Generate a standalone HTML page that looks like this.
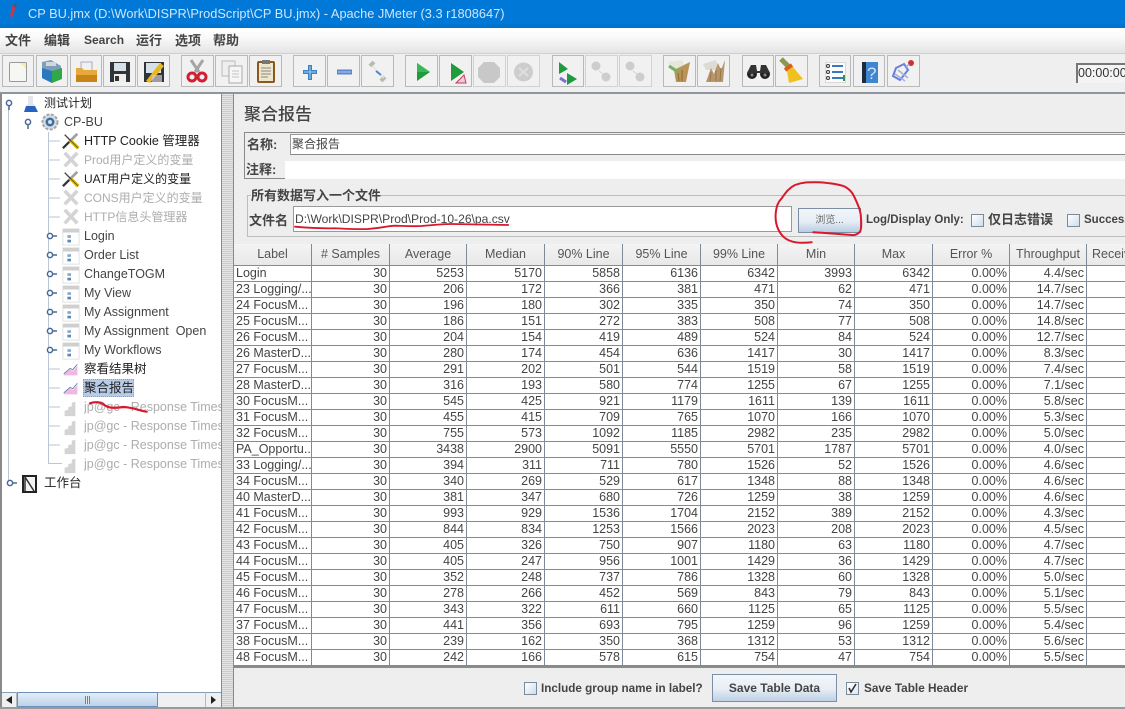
<!DOCTYPE html>
<html><head><meta charset="utf-8">
<style>
html,body{margin:0;padding:0;width:1125px;height:709px;overflow:hidden;background:#eee;}
body{position:relative;font-family:"Liberation Sans","Noto Sans CJK SC",sans-serif;color:#444;}
.a{position:absolute;white-space:nowrap;}
.btn{position:absolute;top:55px;height:32px;box-sizing:border-box;border:1px solid #b9b9b9;background:#f1f1f1;}
.m{position:absolute;top:32px;font-size:13px;line-height:17px;font-weight:bold;color:#444;white-space:nowrap;}
.t{position:absolute;left:84px;font-size:12.5px;line-height:18px;height:18px;white-space:nowrap;color:#444;}
.g{color:#adadad;}
.k{color:#222;}
#tb{position:absolute;left:234px;top:244px;width:891px;height:424px;overflow:hidden;background:#fff;}
table{border-collapse:separate;border-spacing:0;table-layout:fixed;width:891px;font-size:12.5px;color:#444;}
td,th{padding:0 2px 0 1px;height:15px;line-height:15px;border-right:1px solid #7c8a99;border-bottom:1px solid #8a8a8a;text-align:right;overflow:hidden;white-space:nowrap;font-weight:normal;box-sizing:content-box;}
th{height:21px;line-height:21px;text-align:center;background:linear-gradient(#f4f4f4,#e8e8e8);padding:0;border-top:0;color:#555;}
td:first-child{text-align:left;padding-left:2px;padding-right:1px;}
td:last-child{border-right:0;}
.cb{position:absolute;width:13px;height:13px;box-sizing:border-box;border:1px solid #7a8a99;background:linear-gradient(135deg,#fff,#cfdcec);}
</style></head>
<body>
<!-- title bar -->
<div class="a" style="left:0;top:0;width:1125px;height:24px;background:#0078d7;"></div>
<div class="a" style="left:0;top:24px;width:1125px;height:4px;background:#0073ce;"></div>
<div class="a" style="left:28px;top:5px;font-size:12.8px;line-height:18px;color:#cfe5f8;">CP BU.jmx (D:\Work\DISPR\ProdScript\CP BU.jmx) - Apache JMeter (3.3 r1808647)</div>
<!-- menu -->
<div class="a" style="left:0;top:28px;width:1125px;height:25px;background:linear-gradient(#fff,#fafafa 35%,#e4e4e4);"></div>
<div class="m" style="left:5px;">文件</div>
<div class="m" style="left:44px;">编辑</div>
<div class="m" style="left:84px;font-size:12px;">Search</div>
<div class="m" style="left:136px;">运行</div>
<div class="m" style="left:175px;">选项</div>
<div class="m" style="left:213px;">帮助</div>
<!-- toolbar -->
<div class="a" style="left:0;top:53px;width:1125px;height:39px;background:#efefef;border-top:1px solid #d0d0d0;box-sizing:border-box;"></div>
<div class="btn" style="left:2px;width:32px;"></div><div class="btn" style="left:36px;width:32px;"></div><div class="btn" style="left:70px;width:32px;"></div><div class="btn" style="left:103px;width:33px;"></div><div class="btn" style="left:137px;width:33px;"></div>
<div class="btn" style="left:181px;width:33px;"></div><div class="btn" style="left:215px;width:33px;"></div><div class="btn" style="left:249px;width:33px;"></div>
<div class="btn" style="left:293px;width:33px;"></div><div class="btn" style="left:327px;width:33px;"></div><div class="btn" style="left:361px;width:33px;"></div>
<div class="btn" style="left:405px;width:33px;"></div><div class="btn" style="left:439px;width:33px;"></div><div class="btn" style="left:473px;width:33px;border-color:#d2d2d2;"></div><div class="btn" style="left:507px;width:33px;border-color:#d2d2d2;"></div>
<div class="btn" style="left:552px;width:32px;"></div><div class="btn" style="left:585px;width:33px;border-color:#d2d2d2;"></div><div class="btn" style="left:619px;width:33px;border-color:#d2d2d2;"></div>
<div class="btn" style="left:663px;width:33px;"></div><div class="btn" style="left:697px;width:33px;"></div>
<div class="btn" style="left:742px;width:32px;"></div><div class="btn" style="left:775px;width:33px;"></div>
<div class="btn" style="left:819px;width:32px;"></div><div class="btn" style="left:853px;width:32px;"></div><div class="btn" style="left:887px;width:33px;"></div>
<div class="a" style="left:1076px;top:63px;width:49px;height:20px;box-sizing:border-box;border-left:2px solid #777;border-top:2px solid #777;background:#f4f4f4;font-size:12.5px;line-height:17px;color:#333;overflow:hidden;">00:00:00</div>
<div class="a" style="left:0;top:92px;width:1125px;height:2px;background:#8f959c;"></div>
<!-- tree panel -->
<div class="a" style="left:0;top:94px;width:222px;height:613px;background:#fff;box-sizing:border-box;border-left:2px solid #8a8a8a;border-right:1px solid #8a8a8a;"></div>
<div class="a" style="left:222px;top:94px;width:11px;height:613px;background:repeating-linear-gradient(#e6e6e6 0 1px,#c4ccd4 1px 2px);"></div>
<div class="a" style="left:233px;top:94px;width:1px;height:613px;background:#8a8a8a;"></div>
<div class="a" style="left:0;top:707px;width:1125px;height:2px;background:#9a9a9a;"></div>
<!-- scrollbar -->
<div class="a" style="left:2px;top:692px;width:219px;height:15px;background:#eef0f2;border-top:1px solid #8a9cb0;box-sizing:border-box;"></div>
<div class="a" style="left:17px;top:692px;width:141px;height:15px;box-sizing:border-box;border:1px solid #6d8fb8;background:linear-gradient(#e4eef8,#bcd3ea);"></div>
<div class="a" style="left:85px;top:696px;width:5px;height:8px;background:repeating-linear-gradient(90deg,#6f8298 0 1px,#dfe8f2 1px 2px);"></div>
<div class="a" style="left:16px;top:692px;width:1px;height:15px;background:#b0b8c0;"></div>
<div class="a" style="left:205px;top:692px;width:1px;height:15px;background:#b0b8c0;"></div>
<!-- tree labels -->
<div class="t k" style="left:44px;top:94px;font-size:12px;">测试计划</div>
<div class="t" style="left:64px;top:113px;">CP-BU</div>
<div class="t k" style="top:132px;">HTTP Cookie 管理器</div>
<div class="t g" style="top:151px;font-size:12px;">Prod用户定义的变量</div>
<div class="t k" style="top:170px;font-size:12px;">UAT用户定义的变量</div>
<div class="t g" style="top:189px;font-size:12px;">CONS用户定义的变量</div>
<div class="t g" style="top:208px;font-size:12px;">HTTP信息头管理器</div>
<div class="t" style="top:227px;">Login</div>
<div class="t" style="top:246px;">Order List</div>
<div class="t" style="top:265px;">ChangeTOGM</div>
<div class="t" style="top:284px;">My View</div>
<div class="t" style="top:303px;">My Assignment</div>
<div class="t" style="top:322px;">My Assignment&nbsp; Open</div>
<div class="t" style="top:341px;">My Workflows</div>
<div class="t k" style="top:360px;">察看结果树</div>
<div class="a" style="left:83px;top:379px;width:51px;height:18px;background:#b8cce8;box-sizing:border-box;border:1px dotted #8aa0c0;"></div>
<div class="t k" style="top:379px;">聚合报告</div>
<div class="a" style="left:84px;top:398px;width:137px;height:76px;overflow:hidden;">
<div class="t g" style="left:0;top:0;">jp@gc - Response Times Over Time</div>
<div class="t g" style="left:0;top:19px;">jp@gc - Response Times Over Time</div>
<div class="t g" style="left:0;top:38px;">jp@gc - Response Times Over Time</div>
<div class="t g" style="left:0;top:57px;">jp@gc - Response Times Over Time</div>
</div>
<div class="t k" style="left:44px;top:474px;font-size:12.5px;">工作台</div>
<!-- right panel -->
<div class="a" style="left:244px;top:105px;font-size:17px;line-height:20px;color:#444;font-weight:500;">聚合报告</div>
<div class="a" style="left:244px;top:132px;width:881px;height:47px;box-sizing:border-box;border:1px solid #8a8a8a;border-right:0;"></div>
<div class="a" style="left:290px;top:134px;width:835px;height:21px;box-sizing:border-box;background:#fff;border-top:1px solid #999;border-left:1px solid #999;border-bottom:1px solid #888;font-size:12px;line-height:19px;padding-left:1px;color:#444;">聚合报告</div>
<div class="a" style="left:285px;top:161px;width:840px;height:18px;background:#fff;"></div>
<div class="a" style="left:247px;top:136px;font-size:13px;line-height:18px;font-weight:bold;">名称:</div>
<div class="a" style="left:246px;top:161px;font-size:13px;line-height:18px;font-weight:bold;">注释:</div>
<div class="a" style="left:247px;top:195px;width:878px;height:42px;box-sizing:border-box;border:1px solid #bdbdbd;border-right:0;"></div>
<div class="a" style="left:251px;top:187px;background:#eee;font-size:13px;line-height:17px;font-weight:bold;">所有数据写入一个文件</div>
<div class="a" style="left:249px;top:212px;font-size:13px;line-height:18px;font-weight:bold;">文件名</div>
<div class="a" style="left:293px;top:206px;width:499px;height:26px;box-sizing:border-box;background:#fff;border:1px solid #9a9a9a;font-size:12.1px;line-height:24px;padding-left:1px;color:#444;">D:\Work\DISPR\Prod\Prod-10-26\pa.csv</div>
<div class="a" style="left:798px;top:208px;width:63px;height:25px;box-sizing:border-box;border:1px solid #7c8ea4;background:linear-gradient(#f3f6fa,#e6edf5 55%,#b9cde2);font-size:10px;line-height:23px;text-align:center;color:#666;">浏览...</div>
<div class="a" style="left:866px;top:211px;font-size:11.5px;line-height:18px;font-weight:bold;">Log/Display Only:</div>
<div class="cb" style="left:971px;top:214px;"></div>
<div class="a" style="left:988px;top:211px;font-size:13px;line-height:18px;font-weight:bold;">仅日志错误</div>
<div class="cb" style="left:1067px;top:214px;"></div>
<div class="a" style="left:1084px;top:211px;font-size:11.5px;line-height:18px;font-weight:bold;">Success</div>
<!-- table -->
<div id="tb"><table>
<colgroup><col style="width:78px"><col style="width:78px"><col style="width:77px"><col style="width:78px"><col style="width:78px"><col style="width:78px"><col style="width:77px"><col style="width:77px"><col style="width:78px"><col style="width:77px"><col style="width:77px"><col style="width:38px"></colgroup>
<tr><th>Label</th><th># Samples</th><th>Average</th><th>Median</th><th>90% Line</th><th>95% Line</th><th>99% Line</th><th>Min</th><th>Max</th><th>Error %</th><th>Throughput</th><th style="text-align:left;padding-left:5px;border-right:0">Received KB/sec</th></tr>
<tr><td>Login</td><td>30</td><td>5253</td><td>5170</td><td>5858</td><td>6136</td><td>6342</td><td>3993</td><td>6342</td><td>0.00%</td><td>4.4/sec</td><td></td></tr>
<tr><td>23 Logging/...</td><td>30</td><td>206</td><td>172</td><td>366</td><td>381</td><td>471</td><td>62</td><td>471</td><td>0.00%</td><td>14.7/sec</td><td></td></tr>
<tr><td>24 FocusM...</td><td>30</td><td>196</td><td>180</td><td>302</td><td>335</td><td>350</td><td>74</td><td>350</td><td>0.00%</td><td>14.7/sec</td><td></td></tr>
<tr><td>25 FocusM...</td><td>30</td><td>186</td><td>151</td><td>272</td><td>383</td><td>508</td><td>77</td><td>508</td><td>0.00%</td><td>14.8/sec</td><td></td></tr>
<tr><td>26 FocusM...</td><td>30</td><td>204</td><td>154</td><td>419</td><td>489</td><td>524</td><td>84</td><td>524</td><td>0.00%</td><td>12.7/sec</td><td></td></tr>
<tr><td>26 MasterD...</td><td>30</td><td>280</td><td>174</td><td>454</td><td>636</td><td>1417</td><td>30</td><td>1417</td><td>0.00%</td><td>8.3/sec</td><td></td></tr>
<tr><td>27 FocusM...</td><td>30</td><td>291</td><td>202</td><td>501</td><td>544</td><td>1519</td><td>58</td><td>1519</td><td>0.00%</td><td>7.4/sec</td><td></td></tr>
<tr><td>28 MasterD...</td><td>30</td><td>316</td><td>193</td><td>580</td><td>774</td><td>1255</td><td>67</td><td>1255</td><td>0.00%</td><td>7.1/sec</td><td></td></tr>
<tr><td>30 FocusM...</td><td>30</td><td>545</td><td>425</td><td>921</td><td>1179</td><td>1611</td><td>139</td><td>1611</td><td>0.00%</td><td>5.8/sec</td><td></td></tr>
<tr><td>31 FocusM...</td><td>30</td><td>455</td><td>415</td><td>709</td><td>765</td><td>1070</td><td>166</td><td>1070</td><td>0.00%</td><td>5.3/sec</td><td></td></tr>
<tr><td>32 FocusM...</td><td>30</td><td>755</td><td>573</td><td>1092</td><td>1185</td><td>2982</td><td>235</td><td>2982</td><td>0.00%</td><td>5.0/sec</td><td></td></tr>
<tr><td>PA_Opportu...</td><td>30</td><td>3438</td><td>2900</td><td>5091</td><td>5550</td><td>5701</td><td>1787</td><td>5701</td><td>0.00%</td><td>4.0/sec</td><td></td></tr>
<tr><td>33 Logging/...</td><td>30</td><td>394</td><td>311</td><td>711</td><td>780</td><td>1526</td><td>52</td><td>1526</td><td>0.00%</td><td>4.6/sec</td><td></td></tr>
<tr><td>34 FocusM...</td><td>30</td><td>340</td><td>269</td><td>529</td><td>617</td><td>1348</td><td>88</td><td>1348</td><td>0.00%</td><td>4.6/sec</td><td></td></tr>
<tr><td>40 MasterD...</td><td>30</td><td>381</td><td>347</td><td>680</td><td>726</td><td>1259</td><td>38</td><td>1259</td><td>0.00%</td><td>4.6/sec</td><td></td></tr>
<tr><td>41 FocusM...</td><td>30</td><td>993</td><td>929</td><td>1536</td><td>1704</td><td>2152</td><td>389</td><td>2152</td><td>0.00%</td><td>4.3/sec</td><td></td></tr>
<tr><td>42 FocusM...</td><td>30</td><td>844</td><td>834</td><td>1253</td><td>1566</td><td>2023</td><td>208</td><td>2023</td><td>0.00%</td><td>4.5/sec</td><td></td></tr>
<tr><td>43 FocusM...</td><td>30</td><td>405</td><td>326</td><td>750</td><td>907</td><td>1180</td><td>63</td><td>1180</td><td>0.00%</td><td>4.7/sec</td><td></td></tr>
<tr><td>44 FocusM...</td><td>30</td><td>405</td><td>247</td><td>956</td><td>1001</td><td>1429</td><td>36</td><td>1429</td><td>0.00%</td><td>4.7/sec</td><td></td></tr>
<tr><td>45 FocusM...</td><td>30</td><td>352</td><td>248</td><td>737</td><td>786</td><td>1328</td><td>60</td><td>1328</td><td>0.00%</td><td>5.0/sec</td><td></td></tr>
<tr><td>46 FocusM...</td><td>30</td><td>278</td><td>266</td><td>452</td><td>569</td><td>843</td><td>79</td><td>843</td><td>0.00%</td><td>5.1/sec</td><td></td></tr>
<tr><td>47 FocusM...</td><td>30</td><td>343</td><td>322</td><td>611</td><td>660</td><td>1125</td><td>65</td><td>1125</td><td>0.00%</td><td>5.5/sec</td><td></td></tr>
<tr><td>37 FocusM...</td><td>30</td><td>441</td><td>356</td><td>693</td><td>795</td><td>1259</td><td>96</td><td>1259</td><td>0.00%</td><td>5.4/sec</td><td></td></tr>
<tr><td>38 FocusM...</td><td>30</td><td>239</td><td>162</td><td>350</td><td>368</td><td>1312</td><td>53</td><td>1312</td><td>0.00%</td><td>5.6/sec</td><td></td></tr>
<tr><td>48 FocusM...</td><td>30</td><td>242</td><td>166</td><td>578</td><td>615</td><td>754</td><td>47</td><td>754</td><td>0.00%</td><td>5.5/sec</td><td></td></tr>
</table></div>
<div class="a" style="left:234px;top:666px;width:891px;height:2px;background:#8a8a8a;"></div>
<!-- bottom bar -->
<div class="cb" style="left:524px;top:682px;"></div>
<div class="a" style="left:541px;top:680px;font-size:11.7px;line-height:17px;font-weight:bold;">Include group name in label?</div>
<div class="a" style="left:712px;top:674px;width:125px;height:28px;box-sizing:border-box;border:1px solid #7c8ea4;background:linear-gradient(#f4f7fa,#e6edf5 55%,#bdd0e4);font-size:12px;line-height:26px;text-align:center;font-weight:bold;">Save Table Data</div>
<div class="cb" style="left:846px;top:682px;background:linear-gradient(135deg,#fff,#dfe7f1);"></div>
<div class="a" style="left:864px;top:680px;font-size:11.8px;line-height:17px;font-weight:bold;">Save Table Header</div>
<!-- graphics -->
<svg class="a" style="left:0;top:0;" width="1125" height="709" viewBox="0 0 1125 709" fill="none">
<defs>
<symbol id="tool" viewBox="0 0 20 20" overflow="visible"><path d="M17 2 8 11" stroke="#a0a0a0" stroke-width="3"/><path d="M8 11 1 18" stroke="#333" stroke-width="2.500"/><path d="M3 3 10 10" stroke="#444" stroke-width="1.500"/><path d="M10 10 18 18" stroke="#e0bc10" stroke-width="4"/><path d="M10 10 18 18" stroke="#6a5a10" stroke-width="1"/></symbol>
<symbol id="toolg" viewBox="0 0 20 20" overflow="visible"><path d="M3 2 17 17M17 2 3 17" stroke="#d4d4d4" stroke-width="4"/></symbol>
<symbol id="tg" viewBox="0 0 20 20" overflow="visible"><rect x="1" y="1" width="18" height="18" fill="#fff" stroke="#dedede"/><rect x="1" y="1" width="18" height="4" fill="#cfcfcf"/><rect x="6" y="8" width="4" height="3" fill="#8aa8c8"/><rect x="6" y="13" width="4" height="3" fill="#5a88b8"/></symbol>
<symbol id="lst" viewBox="0 0 20 20" overflow="visible"><path d="M1 18V15L9 10l3 3 6-7v12Z" fill="#eeb8e0"/><path d="M1 16 9 9l3 2 6-7" stroke="#5a78a8" stroke-width="1"/></symbol>
<symbol id="jp" viewBox="0 0 20 20" overflow="visible"><path d="M4 19v-6l4-1v-3l4-1V4l4-1v16Z" fill="#d4d4d4"/></symbol>
<symbol id="opn" viewBox="0 0 12 8" overflow="visible"><circle cx="3" cy="4" r="2.600" fill="#fff" stroke="#4a6a96" stroke-width="1.500"/><path d="M5.500 4H10" stroke="#4a6a96" stroke-width="1.500"/></symbol>
<symbol id="exp" viewBox="0 0 8 12" overflow="visible"><circle cx="4" cy="3" r="2.600" fill="#fff" stroke="#4a6a96" stroke-width="1.500"/><path d="M4 5.500V10" stroke="#4a6a96" stroke-width="1.500"/></symbol>
</defs>
<!-- tree lines -->
<path d="M8.500 108V483M48.500 132V463.500H62M48.500 141H60M48.500 160H60M48.500 179H60M48.500 198H60M48.500 217H60M48.500 369H60M48.500 388H60M48.500 407H60M48.500 426H60M48.500 445H60" stroke="#b9c6d6"/>
<use href="#exp" x="5" y="100" width="8" height="12"/>
<use href="#exp" x="24" y="119" width="8" height="12"/>
<use href="#opn" x="47" y="232" width="12" height="8"/><use href="#opn" x="47" y="251" width="12" height="8"/><use href="#opn" x="47" y="270" width="12" height="8"/><use href="#opn" x="47" y="289" width="12" height="8"/><use href="#opn" x="47" y="308" width="12" height="8"/><use href="#opn" x="47" y="327" width="12" height="8"/><use href="#opn" x="47" y="346" width="12" height="8"/>
<use href="#opn" x="7" y="479" width="12" height="8"/>
<!-- plan flask -->
<path d="M28 96h5v7l5 9H24l4-9Z" fill="#e4e6ea"/><path d="M26 106h9l3 6H24Z" fill="#2a62c0"/>
<!-- gear -->
<circle cx="50" cy="122" r="7.500" fill="#d8dee6" stroke="#a5a5a5" stroke-width="2" stroke-dasharray="3 1.500"/><circle cx="50" cy="122" r="4.500" fill="#3f6f9f"/><circle cx="50" cy="122" r="2" fill="#cfe0f2"/>
<use href="#tool" x="62" y="132" width="18" height="18"/><use href="#toolg" x="62" y="151" width="18" height="18"/><use href="#tool" x="62" y="170" width="18" height="18"/><use href="#toolg" x="62" y="189" width="18" height="18"/><use href="#toolg" x="62" y="208" width="18" height="18"/>
<use href="#tg" x="62" y="228" width="18" height="18"/><use href="#tg" x="62" y="247" width="18" height="18"/><use href="#tg" x="62" y="266" width="18" height="18"/><use href="#tg" x="62" y="285" width="18" height="18"/><use href="#tg" x="62" y="304" width="18" height="18"/><use href="#tg" x="62" y="323" width="18" height="18"/><use href="#tg" x="62" y="342" width="18" height="18"/>
<use href="#lst" x="63" y="361" width="16" height="16"/><use href="#lst" x="63" y="380" width="16" height="16"/>
<use href="#jp" x="61" y="399" width="18" height="18"/><use href="#jp" x="61" y="418" width="18" height="18"/><use href="#jp" x="61" y="437" width="18" height="18"/><use href="#jp" x="61" y="456" width="18" height="18"/>
<!-- workbench -->
<rect x="23" y="476" width="13" height="16" fill="#f4f4f4" stroke="#222" stroke-width="2"/><path d="M25 477 34 491M25 477V491" stroke="#333" stroke-width="1.500"/>
<!-- scroll arrows -->
<path d="M6 700 12 696V704ZM216 700 211 696V704Z" fill="#222"/>
<!-- title icon -->
<path d="M13 3 17 4 12 18 10 16Z" fill="#c8384a"/><path d="M14 3l3 1-1 4-3-1Z" fill="#3a5a9a"/>
<!-- toolbar icons -->
<rect x="9.500" y="62.500" width="17" height="19" rx="1" fill="#f6f6f2" stroke="#999"/><path d="M20 63h6v6Z" fill="#f4eeaa"/>
<path d="M42 62 51 60 61 66V79L52 83 42 78Z" fill="#7f9fb8"/><path d="M42 68l10 3v12l-10-5Z" fill="#2a78c0"/><path d="M52 71l10-3v11l-10 4Z" fill="#2fa84a"/><path d="M46 62h10v4H46Z" fill="#cfd8de"/>
<path d="M81 62h11v11H81Z" fill="#eef0f4" stroke="#aab"/><path d="M76 68h6l2 2h13v12H76Z" fill="#e8a93c"/><path d="M76 75h21v7H76Z" fill="#c98418"/>
<rect x="110" y="62" width="20" height="20" fill="#2f3438"/><rect x="114" y="63" width="12" height="8" fill="#d8e0e8"/><rect x="114" y="74" width="12" height="8" fill="#eee"/><rect x="115" y="76" width="4" height="5" fill="#333"/>
<rect x="144" y="62" width="20" height="20" fill="#2f3438"/><path d="M146 63h15v10h-15Z" fill="#d8e0e8"/><path d="M146 81 160 63l4 3-14 17Z" fill="#e8b820"/><path d="M152 75h10v7h-10Z" fill="#cfc8d4" opacity=".7"/>
<path d="M191 60 199 72M203 60 195 72" stroke="#a5a5a5" stroke-width="3"/><circle cx="192" cy="77" r="4" stroke="#d02030" stroke-width="3"/><circle cx="202" cy="77" r="4" stroke="#d02030" stroke-width="3"/>
<rect x="222" y="61" width="13" height="15" fill="#eee" stroke="#bbb"/><path d="M229 66h13v17h-13Z" fill="#f6f6f6" stroke="#aaa"/><path d="M232 71h7M232 74h7M232 77h7" stroke="#c4c4c4"/>
<rect x="258" y="62" width="16" height="20" rx="1" fill="#f0e6cc" stroke="#8a5a1c" stroke-width="2"/><rect x="262" y="60" width="8" height="4" fill="#777"/><path d="M261 68h10M261 71h10M261 74h10M261 77h7" stroke="#888"/>
<path d="M310 65V80M303 72H317" stroke="#3a82c8" stroke-width="4"/><path d="M310 66V79M304 72H316" stroke="#a8ccec" stroke-width="1"/>
<rect x="337" y="69.500" width="15" height="5" fill="#5b86d0"/><path d="M338 72H351" stroke="#b8d0f0"/>
<path d="M370 66 374 62M381 81 385 77" stroke="#b5bda5" stroke-width="4"/><path d="M372 66 384 78" stroke="#e2e4da" stroke-width="1.500"/><path d="M376 71 381 75" stroke="#4a88d0" stroke-width="2"/>
<path d="M417 63 430 72 417 81Z" fill="#1f9a3c"/><path d="M417 63 430 72H417Z" fill="#39b858"/>
<path d="M451 63 464 72 451 81Z" fill="#1f9a3c"/><path d="M456 83 464 75 466 83Z" fill="#f4c8d8" stroke="#c04060"/>
<path d="M484 62h10l6 6v9l-6 6h-10l-6-6V68Z" fill="#c8c8c8"/>
<circle cx="523.500" cy="72" r="9.500" fill="#cdcdcd"/><path d="M519 68 528 76M528 68 519 76" stroke="#e0e0e0" stroke-width="2"/>
<path d="M559 62 568 69 559 74Z" fill="#1f9a3c"/><path d="M567 73 577 79 567 85Z" fill="#1f9a3c"/><path d="M560 78 566 82" stroke="#7a70d0" stroke-width="3"/>
<circle cx="596" cy="66" r="4.500" fill="#cdcdcd"/><circle cx="606" cy="77" r="4.500" fill="#cdcdcd"/><path d="M599 71 603 74" stroke="#d4d4d4"/>
<circle cx="630" cy="66" r="4.500" fill="#cdcdcd"/><circle cx="640" cy="77" r="4.500" fill="#cdcdcd"/><path d="M633 71 637 74" stroke="#d4d4d4"/>
<path d="M668 62 682 60 686 70H672Z" fill="#e4e8da"/><path d="M674 70 690 62 686 82 676 82Z" fill="#b89458"/><path d="M669 66 678 72" stroke="#7ab060" stroke-width="3"/><path d="M678 73 679 81M682 70 682 81" stroke="#8a6a30"/>
<path d="M703 64 716 60 719 70H706Z" fill="#dcdcd4"/><path d="M706 82 711 68 714 74 718 63 721 70 725 60 723 82Z" fill="#b8956a"/><path d="M711 72 710 81M716 70 716 81M721 68 720 81" stroke="#97764c"/>
<circle cx="752" cy="74" r="5" fill="#222"/><circle cx="765" cy="74" r="5" fill="#222"/><path d="M747 73 751 65H756L757 71H760L761 65H766L770 73Z" fill="#333"/><circle cx="752" cy="75" r="1.500" fill="#888"/><circle cx="765" cy="75" r="1.500" fill="#888"/>
<path d="M781 59 788 66" stroke="#8a9a50" stroke-width="5"/><path d="M785 70 792 65" stroke="#d86018" stroke-width="4"/><path d="M787 71 793 67 803 79 789 83Z" fill="#f0c020"/>
<rect x="825.500" y="62.500" width="20" height="20" fill="#fbfbfb" stroke="#d8d8d8"/><path d="M832 66H843M832 72H843M832 78H843" stroke="#3a78c0" stroke-width="2"/><circle cx="828" cy="66" r="1.500" stroke="#333"/><circle cx="828" cy="72" r="1.500" stroke="#333"/><circle cx="828" cy="78" r="1.500" stroke="#333"/><rect x="843" y="75" width="2" height="6" fill="#2a9a40"/>
<rect x="862" y="62" width="16" height="21" fill="#3f86d0"/><rect x="862" y="62" width="4" height="21" fill="#1c2c3c"/><text x="867" y="79" font-family="Liberation Sans" font-size="17" fill="#cfe4fa">?</text>
<circle cx="911" cy="63" r="3" fill="#d03030"/><path d="M896 68 904 64 908 70 900 80 893 76Z" stroke="#6a80d8" stroke-width="2"/><path d="M898 70 908 78M895 74 905 81M906 67 909 64" stroke="#a0aee0" stroke-width="1.500"/>
<!-- checkmark -->
<path d="M849 688 851 692 856 684" stroke="#333" stroke-width="1.600"/>
<!-- red annotations -->
<path d="M811.700 242.300C800 243.500 790 243 783.300 236.700 777 230 775 222 775.700 213.300 776.500 206 778 202 781.700 198.300 786 192 789 188 795 185 803 182 810 182 818.300 182.300 830 183 838 184 845 186.700 851 190 853 194 855 198.300 859 207 861 212 861 218.300 861.500 225 861 230 860 231.700 857 235 854 235.300 851.700 235 838 234 825 233 813.300 232.300" stroke="#d8182c" stroke-width="2" stroke-linecap="round"/>
<path d="M295 226.700C310 228 325 228.500 335 228.300 350 229 360 229.500 368 229 380 228 388 226 395 225.700 405 226 413 226.500 421.700 226 432 225 442 224 451.700 224L508.300 225" stroke="#d8182c" stroke-width="1.800" stroke-linecap="round"/>
<path d="M90 403.300C95 401.500 100 402 103 404 108 408 112 408.500 123 407 132 407 140 411 146.700 411.700" stroke="#d8182c" stroke-width="2.200" stroke-linecap="round"/>
</svg>
</body></html>
